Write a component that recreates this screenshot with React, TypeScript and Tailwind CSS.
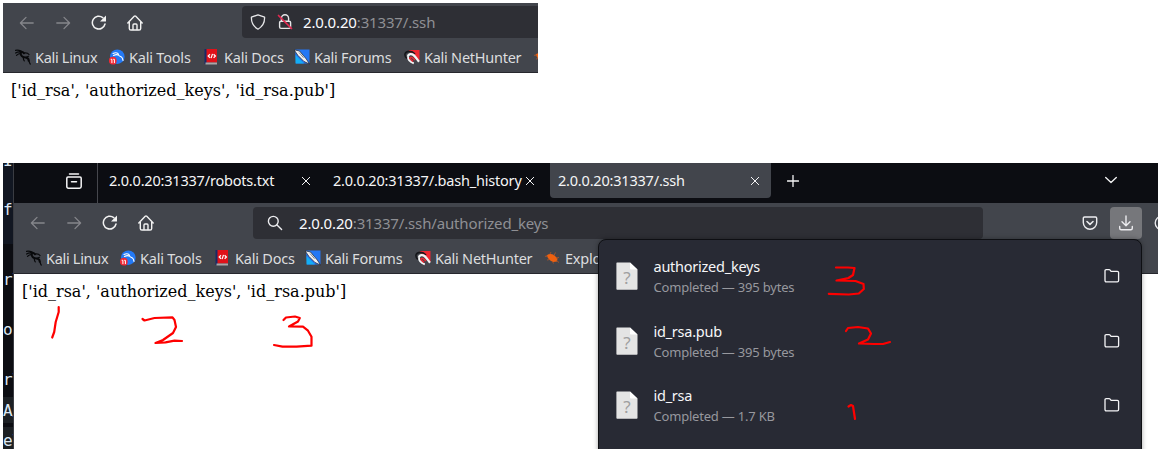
import React from "react";

type IconProps = { className?: string };

const stroke = {
  fill: "none",
  stroke: "currentColor",
  strokeWidth: 1.3,
  strokeLinecap: "round" as const,
  strokeLinejoin: "round" as const,
};

function Arrow({ className = "" }: IconProps) {
  return (
    <svg className={`h-4 w-4 ${className}`} viewBox="0 0 16 16" {...stroke}>
      <path d="M14.2 8H1.6M7 2.4 1.4 8 7 13.6" />
    </svg>
  );
}

function Reload() {
  return (
    <svg className="h-4 w-4" viewBox="0 0 16 16" {...stroke} strokeWidth={1.5}>
      <path d="M11.8 2.6A6.4 6.4 0 1 0 14 9" />
      <path d="M15 .6v6H9z" fill="currentColor" stroke="none" />
    </svg>
  );
}

function Home() {
  return (
    <svg className="h-4 w-4" viewBox="0 0 16 16" {...stroke} strokeWidth={1.4}>
      <path d="M.8 7.900 7.200 1.300q.8-.8 1.600 0l6.400 6.600M2.300 7v6.400q0 1.600 1.600 1.600h8.200q1.600 0 1.600-1.600V7" />
      <path d="M6 14.5V10q0-1 1-1h2q1 0 1 1v4.500" />
    </svg>
  );
}

function Shield() {
  return (
    <svg className="h-4 w-4" viewBox="0 0 16 16" {...stroke}>
      <path d="M8 .8 14.600 3.200C14.800 9 12 13 8 15.200 4 13 1.200 9 1.400 3.200z" />
    </svg>
  );
}

function LockOff() {
  return (
    <svg className="h-4 w-4" viewBox="0 0 16 16" {...stroke} strokeWidth={1.4}>
      <path d="M4.400 7V4.400a3.600 3.600 0 0 1 7.200 0V7M4 7.200h8.200q1.400 0 1.400 1.400v4.400q0 1.400-1.400 1.400H4q-1.400 0-1.400-1.400V8.600q0-1.400 1.400-1.400z" />
      <path d="M1.500 1.500l13 13" stroke="#e22850" strokeWidth="1.700" />
    </svg>
  );
}

function Search() {
  return (
    <svg className="h-4 w-4" viewBox="0 0 16 16" {...stroke} strokeWidth={1.4}>
      <circle cx="6.300" cy="6.300" r="4.900" />
      <path d="m10 10 4.600 4.600" />
    </svg>
  );
}

function Close() {
  return (
    <svg className="h-2 w-2" viewBox="0 0 8 8" {...stroke} strokeWidth={1}>
      <path d="m.3.300 7.400 7.400m0-7.400-7.400 7.400" />
    </svg>
  );
}

function Folder() {
  return (
    <svg className="h-4 w-4 text-[#f4f4f6]" viewBox="0 0 16 16" {...stroke} strokeWidth={1.3}>
      <path d="M2.200 1.600h2.900q.6 0 1 .5l1 1.200h6.200q1.300 0 1.300 1.300v8q0 1.300-1.300 1.300H2.300q-1.300 0-1.300-1.300V2.800q0-1.200 1.200-1.200z" />
    </svg>
  );
}

function FileIcon() {
  return (
    <svg className="h-7 w-[22px]" viewBox="0 0 22 28">
      <path d="M1 .5h13l7.500 7V27q0 .8-.8.8H1.200q-.8 0-.8-.8V1.200q0-.7.6-.7z" fill="#e4e4e4" />
      <path d="M14 .5v6.300q0 .8.800.8h6.700z" fill="#fff" />
      <text x="11" y="21.500" textAnchor="middle" fontFamily="Noto Sans, sans-serif" fontSize="17" fill="#9f9f9f">
        ?
      </text>
    </svg>
  );
}

function KaliDragon() {
  return (
    <svg className="h-4 w-4" viewBox="0 0 16 16" fill="none" stroke="#08090b" strokeLinecap="round" strokeLinejoin="round">
      <path d="M.5 1.300q3-.5 5.500.8M.6 4q2.500-1.500 5.200-.9M1.500 6.300Q3.500 4.300 6 4.500" strokeWidth="1.200" />
      <path d="M5.500 2.500c2 .3 3 .9 3.500 1.700M5.500 3.800c.1 3.500 2 4.500 5 4.700 2.300.2 3.300 1.300 3.200 3.200" strokeWidth="2" />
      <path d="M8.500 4c2.500-.5 4.500 0 5.500 1.500M14 11.500q.2 2 1.300 3.600M8.500 8q-.5 2.500.8 3.800M11 8.300l2.500-1" strokeWidth="1.200" />
    </svg>
  );
}

function KaliTools() {
  return (
    <svg className="h-4 w-4" viewBox="0 0 16 16">
      <circle cx="8.300" cy="7.700" r="7.300" fill="#2379f5" />
      <path d="M4 4.500q3-1.500 5 0M4.500 6.500q3-1.500 4.300-.5M9 4.500q.5 2.500 2.500 3t2.500 4" fill="none" stroke="#fff" strokeWidth="1.100" strokeLinecap="round" />
      <circle cx="3.800" cy="11.700" r="3.900" fill="#ef2835" />
      <path d="M1.700 10.300h1.200v3.800M4.200 10.300h1.200v3.800" fill="none" stroke="#fff" strokeWidth="1" />
    </svg>
  );
}

function KaliDocs() {
  return (
    <svg className="h-4 w-4" viewBox="0 0 16 16">
      <path d="M2 0h11v13.500H2z" fill="#e01119" />
      <path d="M.5 0h2v15h-2z" fill="#182a67" />
      <path d="M1.500 13.500H13v2H1.500z" fill="#aaa6a8" />
      <path d="M6 5.300 4.200 7 6 8.700M9.600 5.300 11.400 7 9.600 8.700M8.500 4.900 7.100 9.100" stroke="#fff" strokeWidth="1.200" fill="none" />
    </svg>
  );
}

function KaliForums() {
  return (
    <svg className="h-4 w-4" viewBox="0 0 16 16">
      <path d="M1 .5h14.500v14H2z" fill="#2477f4" />
      <path d="M1.500 6v8.500H10z" fill="#14aef5" />
      <path d="M0 .8 5.500 2 12.300 10 15.500 15 10 12.500 4 6.500z" fill="#f1f1f3" stroke="#202126" strokeWidth=".7" />
      <path d="m5 3.500 4.500 5.200" stroke="#696c76" strokeWidth=".8" />
    </svg>
  );
}

function KaliNetHunter() {
  return (
    <svg className="h-4 w-4" viewBox="0 0 16 16">
      <path d="M4.500 1h11v11L10 8z" fill="#ef2732" />
      <path d="M2.800 9.500C-.7 6 1 2.300 5.500 2.400c3 0 4 1 5.500 2.600" stroke="#16171b" strokeWidth="1.600" fill="none" />
      <path d="M3.800 7.500C4.500 4.800 7.500 4.500 9.500 6c2 1.500 3.300 4 5.500 6.800" stroke="#f4f4f5" strokeWidth="2.200" fill="none" />
      <path d="M4 7.300C3.800 10 5.500 12.800 9.800 14.300" stroke="#f4f4f5" strokeWidth="1.800" fill="none" />
      <path d="M11 10.800 8 8.500Q6 8 5.800 9.500l3.300 3" stroke="#ef2732" strokeWidth="1.500" fill="none" />
    </svg>
  );
}

function ExploitDb() {
  return (
    <svg className="h-4 w-4" viewBox="0 0 16 16">
      <path d="M1.500 5.500Q5 3 9 5L12.500 8.500 12 11.500 8 12Q4 10.500 1.500 5.500z" fill="#ef6110" />
      <path d="M0 6.300h3M4.500 9.500 2 10M5 4l1-2M9 5.500l1.500-3M11 8l3-.5M11.500 10.500l2.500 2M7.500 11.500l1 2" stroke="#a95228" strokeWidth=".9" />
    </svg>
  );
}

const bookmarks = [
  { label: "Kali Linux", icon: <KaliDragon />, width: "w-[94px]", tracking: "tracking-[-0.3px]" },
  { label: "Kali Tools", icon: <KaliTools />, width: "w-[95px]", tracking: "tracking-[-0.2px]" },
  { label: "Kali Docs", icon: <KaliDocs />, width: "w-[90px]", tracking: "tracking-[-0.2px]" },
  { label: "Kali Forums", icon: <KaliForums />, width: "w-[110px]", tracking: "tracking-[-0.25px]" },
  { label: "Kali NetHunter", icon: <KaliNetHunter />, width: "w-[130px]", tracking: "tracking-[-0.25px]" },
  { label: "Exploit-DB", icon: <ExploitDb />, width: "w-[94px]", tracking: "tracking-[-0.2px]" },
];

function BookmarksBar() {
  return (
    <div className="flex h-[31px] items-center overflow-hidden border-b border-[#26272d] bg-[#42454c] pl-3">
      {bookmarks.map((b) => (
        <div key={b.label} className={`flex shrink-0 items-center gap-1 ${b.width}`}>
          {b.icon}
          <span className={`whitespace-nowrap text-[14.5px] leading-5 text-[#dcdddf] ${b.tracking}`}>{b.label}</span>
        </div>
      ))}
    </div>
  );
}

function NavButtons() {
  return (
    <div className="flex w-[239px] shrink-0 items-center gap-5 pl-4 text-[#f2f2f2]">
      <Arrow className="text-[#85868b]" />
      <Arrow className="rotate-180 text-[#85868b]" />
      <Reload />
      <Home />
    </div>
  );
}

function Listing() {
  return (
    <p className="whitespace-nowrap pl-2 pt-[7px] font-['DejaVu_Serif',serif] text-base leading-[22px] text-black">
      {"['id_rsa', 'authorized_keys', 'id_rsa.pub']"}
    </p>
  );
}

function Url({ rest }: { rest: string }) {
  return (
    <span className="whitespace-nowrap text-[15px] tracking-[-0.15px] text-[#8f8f94]">
      <span className="text-[#fbfbfe]">2.0.0.20</span>
      {rest}
    </span>
  );
}

const tabs = [
  { title: "2.0.0.20:31337/robots.txt", box: "w-[228px] h-10 border-l border-[#46474d] pl-[11px] pr-[15px]" },
  { title: "2.0.0.20:31337/.bash_history", box: "w-[225px] h-10 pl-2 pr-4" },
  { title: "2.0.0.20:31337/.ssh", box: "w-[221px] h-[35px] rounded-b bg-[#42454c] pl-2 pr-3" },
];

function TabStrip() {
  return (
    <div className="flex h-10 items-start bg-[#0c0d12] text-[#f5f5f6]">
      <div className="flex h-[35px] w-[83px] items-center justify-end pr-[15px]">
        <svg className="h-4 w-4" viewBox="0 0 16 16" {...stroke} strokeWidth={1.5}>
          <path d="M3.500.9h9M2 4h12q1.200 0 1.200 1.200v8.300q0 1.700-1.700 1.700h-11Q.8 15.200.8 13.500V5.200Q.8 4 2 4zM5.500 8.700h5" />
        </svg>
      </div>
      {tabs.map((tab) => (
        <div key={tab.title} className={`flex shrink-0 items-start justify-between ${tab.box}`}>
          <span className="whitespace-nowrap text-[14.5px] leading-[35px] tracking-[-0.2px]">{tab.title}</span>
          <span className="flex h-[35px] items-center">
            <Close />
          </span>
        </div>
      ))}
      <div className="flex h-[35px] w-[43px] items-center justify-center">
        <svg className="h-3 w-3" viewBox="0 0 12 12" {...stroke}>
          <path d="M6 .5v11M.5 6h11" />
        </svg>
      </div>
      <div className="ml-auto flex h-[34px] items-center pr-[41px]">
        <svg className="h-3 w-3" viewBox="0 0 12 12" {...stroke}>
          <path d="m.7 3.500 5.300 5 5.300-5" />
        </svg>
      </div>
    </div>
  );
}

const terminalText = [
  { char: "I", row: "h-[27px] bg-[#121722]", text: "mt-[-14px]" },
  { char: "f", row: "h-[54px] bg-[#121722]", text: "mt-2" },
  { char: "rl", row: "h-[61px]", text: "mt-6" },
  { char: "o", row: "h-[49px]", text: "mt-[13px]" },
  { char: "rl", row: "h-[43px]", text: "mt-[14px]" },
  { char: "A/", row: "h-[26px] bg-[#1c2024]", text: "mt-0.5" },
  { char: "el", row: "h-[26px] border-t-4 border-[#0c0d12] bg-[#1c2024]", text: "mt-0.5" },
];

function TerminalEdge() {
  return (
    <div className="w-[11px] shrink-0 overflow-hidden border-r border-[#3a3c42] bg-[#0c0d12] font-['DejaVu_Sans_Mono',monospace] text-base leading-6 text-[#dce8f4]">
      {terminalText.map((t, i) => (
        <div key={i} className={`flex overflow-hidden ${t.row}`}>
          <span className={`whitespace-nowrap tracking-[-1px] ${t.text}`}>
            {t.char[0]}
            <span className="text-[#258fc4]">{t.char.slice(1)}</span>
          </span>
        </div>
      ))}
    </div>
  );
}

const downloads = [
  { name: "authorized_keys", status: "Completed — 395 bytes", height: "h-[65px]" },
  { name: "id_rsa.pub", status: "Completed — 395 bytes", height: "h-16" },
  { name: "id_rsa", status: "Completed — 1.7 KB", height: "h-16" },
];

function DownloadsPanel() {
  return (
    <div className="absolute left-[584px] top-[76px] h-[220px] w-[544px] rounded-t-lg border border-[#0e0f13] bg-[#282a34] pt-1 shadow-[0_0_5px_rgba(0,0,0,0.35)]">
      {downloads.map((d) => (
        <div key={d.name} className={`flex items-start pl-[17px] pr-[21px] ${d.height}`}>
          <div className="pt-[18px]">
            <FileIcon />
          </div>
          <div className="ml-[15.500px] flex flex-col pt-[11px]">
            <span className="text-[14.5px] leading-[22px] tracking-[-0.25px] text-[#f6f6f8]">{d.name}</span>
            <span className="text-[13px] leading-5 tracking-[-0.2px] text-[#97989e]">{d.status}</span>
          </div>
          <div className="ml-auto pt-6">
            <Folder />
          </div>
        </div>
      ))}
    </div>
  );
}

function Annotations() {
  return (
    <svg
      className="pointer-events-none absolute left-0 top-0 h-[451px] w-[1160px]"
      viewBox="0 0 1160 451"
      fill="none"
      stroke="#fe0000"
      strokeWidth="2.2"
      strokeLinecap="round"
      strokeLinejoin="round"
    >
      <path d="M58.700 307v5l-3 10-1.500 10-2 5.500" />
      <path d="M142.500 319l2 1.500 10-2.500 18-.7 2 2.700 1.500 7-3 6-10 7-7.500 3 10-.6 9-1.700 7.500.3" />
      <path d="M283.500 320l2.500-2.500 9-1 4.800 1.500-1.800 3.500-9 5 14 .2 5 4 3.500 6v9l-15 1-14 0-8.500-1.700" />
      <path d="M836 267.500h12l6.500.5-1.500 7-4.500 3-12 2.500 19 .5 8 3 .3 5-5 4.500-10 1-20-.7" />
      <path d="M846 331l2-3 10-1 10 1.500 3 5-3 6-9 4 15 .5 9 0 7-2" />
      <path d="M848.500 406.500l2.500-1.500 2 1 2 13" />
    </svg>
  );
}

export default function App() {
  return (
    <main className="relative h-[451px] w-[1160px] overflow-hidden bg-white pl-[3px] pt-[3px] font-['Noto_Sans',sans-serif]">
      <section className="h-40 w-[535px]">
        <div className="flex h-[39px] bg-[#42454c]">
          <NavButtons />
          <div className="mt-[3px] flex h-8 min-w-0 flex-1 items-center rounded-l bg-[#2e2f35] pl-2 text-[#e6e6e8]">
            <Shield />
            <span className="ml-[11px] mr-2.5 flex">
              <LockOff />
            </span>
            <Url rest=":31337/.ssh" />
          </div>
        </div>
        <BookmarksBar />
        <Listing />
      </section>
      <section className="flex h-[286px] w-[1155px]">
        <TerminalEdge />
        <div className="relative h-[286px] w-[1144px] overflow-hidden">
          <TabStrip />
          <div className="flex h-10 overflow-hidden bg-[#42454c] text-[#ececef]">
            <NavButtons />
            <div className="mt-1 flex h-8 w-[730px] shrink-0 items-center gap-4 rounded bg-[#2e2f35] pl-3.5">
              <Search />
              <Url rest=":31337/.ssh/authorized_keys" />
            </div>
            <div className="ml-[99px] flex w-4 shrink-0 items-center">
              <svg className="h-4 w-4" viewBox="0 0 16 16" {...stroke} strokeWidth={1.4}>
                <path d="M2.600 2h10.800q1.300 0 1.300 1.300v4.200a6.700 6.700 0 0 1-13.400 0V3.300Q1.300 2 2.600 2z" />
                <path d="m5 6.500 3 2.800 3-2.800" strokeWidth="1.600" />
              </svg>
            </div>
            <div className="ml-3 mt-1 flex h-8 w-8 shrink-0 items-center justify-center rounded bg-[#76777b]">
              <svg className="h-4 w-4" viewBox="0 0 16 16" {...stroke} strokeWidth={1.4}>
                <path d="M8 1v9.500M4 6.800l4 4 4-4M1.700 11.500v1.800q0 1.500 1.500 1.500h9.600q1.500 0 1.500-1.500v-1.800" />
              </svg>
            </div>
            <div className="ml-3 flex w-4 shrink-0 items-center">
              <svg className="h-4 w-4 shrink-0" viewBox="0 0 16 16" {...stroke}>
                <circle cx="8" cy="8" r="6.800" />
              </svg>
            </div>
          </div>
          <BookmarksBar />
          <Listing />
          <DownloadsPanel />
        </div>
      </section>
      <Annotations />
    </main>
  );
}
